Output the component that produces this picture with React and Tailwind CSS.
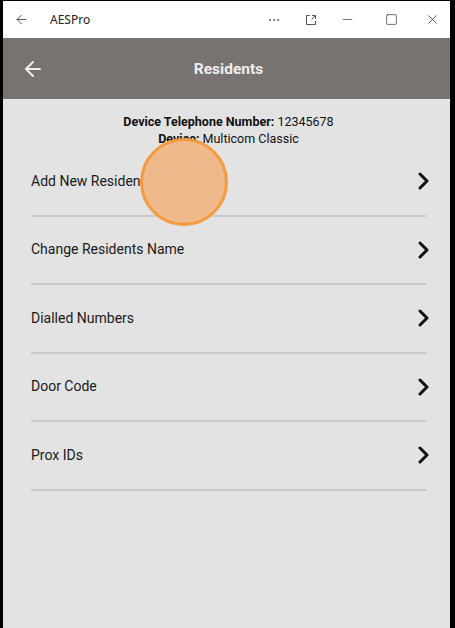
import { Minus, Square, X, ArrowLeft, MoreHorizontal } from "lucide-react";

const items = ["Add New Resident", "Change Residents Name", "Dialled Numbers", "Door Code", "Prox IDs"];

export default function App() {
  return (
    <div className="flex h-[628px] w-[455px] flex-col bg-black pl-[3px] pr-[5px] pt-[1px]" style={{ fontFamily: "Roboto, 'Noto Sans', sans-serif" }}>
      <TitleBar />
      <div className="flex h-[61px] items-center bg-[#787271] px-[20px]">
        <ArrowLeft size={24} strokeWidth={2} className="-ml-[2px] text-[#f0eeee]" />
        <h1 className="flex-1 pr-[18px] pt-[3px] text-center text-[15.5px] font-bold text-[#efeded]">Residents</h1>
      </div>
      <div className="relative flex-1 border-t border-[#ebebeb] bg-[#e3e3e3]">
        <div className="pl-[4px] pt-[13px] text-center text-[12.5px] leading-[17px] text-[#111]">
          <p>
            <span className="font-bold">Device Telephone Number:</span> 12345678
          </p>
          <p>
            <span className="font-bold">Device:</span> Multicom Classic
          </p>
        </div>
        <ul className="mt-[1px] pl-[28px] pr-[24px]">
          {items.map((label) => (
            <li key={label} className="flex h-[68.5px] items-center justify-between border-b-2 border-[#c8c8c8] text-[14px] text-[#1a1a1a]">
              <span>{label}</span>
              <svg width="12" height="18" viewBox="0 0 12 18" className="-mr-[3px]">
                <polyline points="3,2 10,9 3,16" fill="none" stroke="#111" strokeWidth="3" strokeLinecap="round" strokeLinejoin="round" />
              </svg>
            </li>
          ))}
        </ul>
        <div className="absolute left-[137px] top-[38px] h-[88px] w-[88px] rounded-full border-[3.5px] border-[#f59a3e] bg-[#efb98b]" />
      </div>
    </div>
  );
}

function TitleBar() {
  return (
    <div className="flex h-[37px] items-center bg-white text-[#222]" style={{ fontFamily: "'Noto Sans', sans-serif" }}>
      <ArrowLeft size={15} strokeWidth={1.2} className="ml-[11px]" />
      <span className="ml-[21px] text-[12px]">AESPro</span>
      <div className="ml-auto flex items-center">
        <MoreHorizontal size={14} strokeWidth={1.5} className="mr-[24px] text-[#555]" />
        <svg width="12" height="12" viewBox="0 0 12 12" className="mr-[23px]" fill="none" stroke="#555" strokeWidth="1">
          <path d="M5 1.5H1.5v9h9V7" />
          <path d="M7 1.5h3.5V5M10.5 1.5 6.5 5.5" />
        </svg>
        <Minus size={15} strokeWidth={1} className="mr-[30px]" />
        <Square size={13} strokeWidth={1.2} className="mr-[27px]" />
        <X size={15} strokeWidth={1.2} className="mr-[10px]" />
      </div>
    </div>
  );
}
